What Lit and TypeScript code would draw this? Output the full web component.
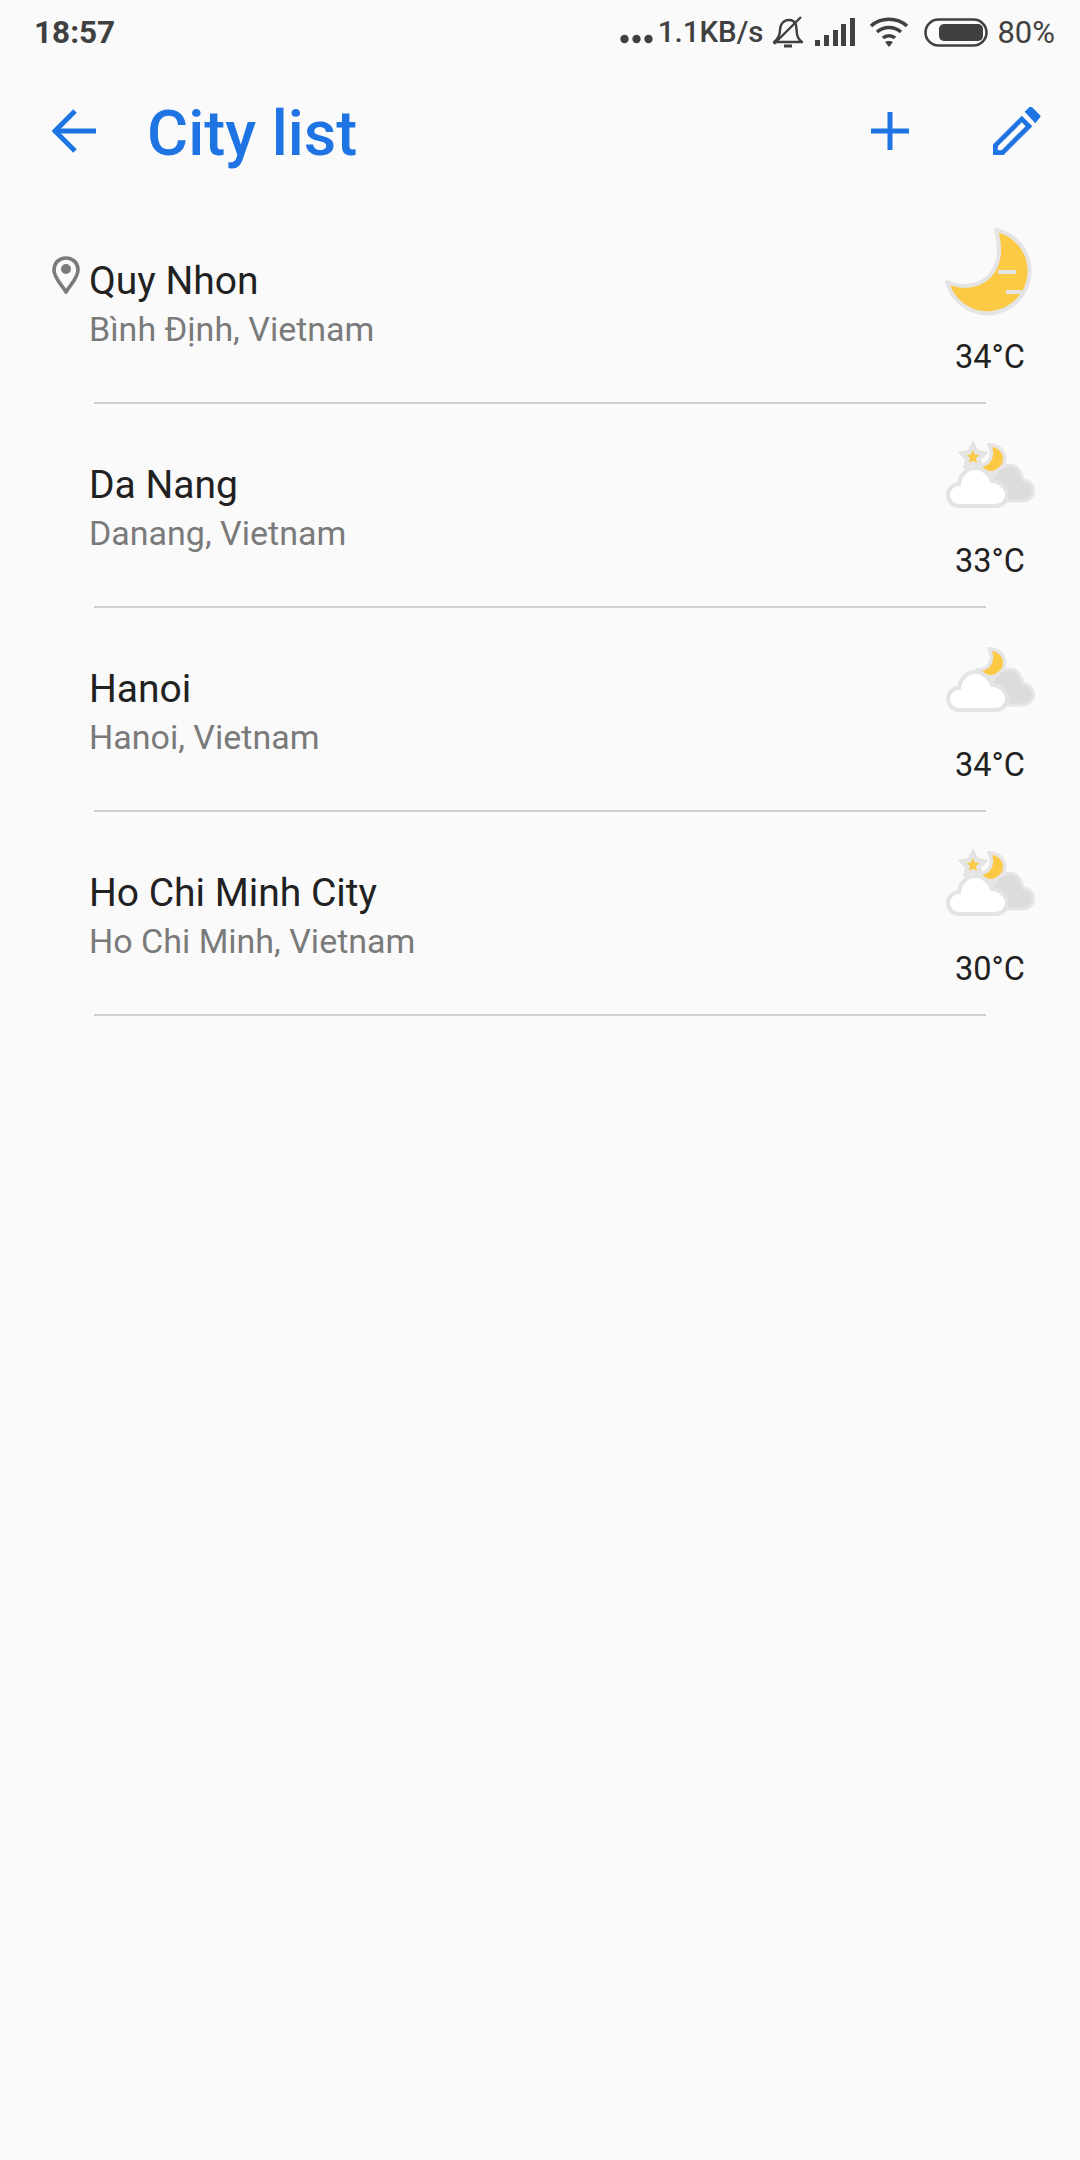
import { LitElement, html, svg, css } from 'lit';
import { customElement } from 'lit/decorators.js';

const cities = [
  { name: 'Quy Nhon', region: 'Bình Định, Vietnam', temp: '34°C', icon: 'moon', pin: true },
  { name: 'Da Nang', region: 'Danang, Vietnam', temp: '33°C', icon: 'star', pin: false },
  { name: 'Hanoi', region: 'Hanoi, Vietnam', temp: '34°C', icon: 'cloud', pin: false },
  { name: 'Ho Chi Minh City', region: 'Ho Chi Minh, Vietnam', temp: '30°C', icon: 'star', pin: false },
];

const moonIcon = html`<svg width="96" height="96" viewBox="0 0 96 96">
  <path d="M54 6 A42 42 0 1 1 5 58 C30 70 68 55 54 6 Z" fill="#fcc945" stroke="#e4e4e4" stroke-width="4" stroke-linejoin="round"/>
  <path d="M56 48 H74 M64 68 H80" stroke="#e4e4e4" stroke-width="4" fill="none"/>
</svg>`;

const cloudIcon = (star: boolean) => html`<svg width="96" height="96" viewBox="0 0 96 96">
  ${star ? svg`<path d="M31 14 L35.500 23 L45 24.500 L38 31 L40 40 L31 36 L22 40 L24 31 L17 24.500 L26.500 23 Z" fill="#e4e4e4" stroke="#e4e4e4" stroke-width="2" stroke-linejoin="round"/>
  <path d="M31 22 L33 26.500 L37.500 27 L34 30 L35 35 L31 32.500 L27 35 L28 30 L24.500 27 L29 26.500 Z" fill="#fcc945"/>` : ''}
  <path d="M50 19 A12 12 0 1 1 40 39 C47 38 54 30 50 19 Z" fill="#fcc945" stroke="#e4e4e4" stroke-width="7" paint-order="stroke"/>
  <path d="M56 73 H81 A10.500 10.500 0 0 0 81 52 C79 42 74 37 68 37 C60 37 54 42 50 50 Z" fill="#dcdcdc" stroke="#e6e6e6" stroke-width="3"/>
  <path d="M17 78 A11 11 0 0 1 17 56 C18 46 26 40 33 40 C41 40 48 46 50 53 C58 53 65 60 65 67 C65 73 60 78 54 78 Z" fill="#fff" stroke="#e4e4e4" stroke-width="4"/>
</svg>`;

@customElement('app-root')
export class AppRoot extends LitElement {
  static styles = css`
    :host {
      display: block;
      width: 1080px;
      height: 2160px;
      background: #fafafa;
      font-family: Roboto, sans-serif;
      overflow: hidden;
    }

    .status {
      display: flex;
      align-items: center;
      height: 62px;
      padding: 2px 25px 0 34px;
      box-sizing: border-box;
      color: #404040;
      font-size: 30px;
    }

    .time {
      font-size: 31.5px;
      font-weight: 700;
      flex: 1;
    }

    .dots {
      margin-top: 14px;
    }

    .speed {
      font-weight: 500;
      margin-left: 5px;
      font-size: 29.5px;
    }

    .status svg {
      display: block;
      flex: none;
    }

    .bell {
      margin-left: 9px;
    }

    .signal {
      margin-left: 11px;
    }

    .wifi {
      margin-left: 14px;
    }

    .battery {
      margin-left: 15px;
    }

    .percent {
      margin-left: 9px;
      font-size: 31px;
    }

    .header {
      display: flex;
      align-items: center;
      height: 138px;
      color: #1f74e4;
    }

    .header svg {
      display: block;
      flex: none;
    }

    .back {
      margin-left: 52px;
    }

    .title {
      flex: 1;
      margin-left: 51px;
      padding-top: 4px;
      font-size: 63px;
      font-weight: 500;
    }

    .edit {
      margin: 0 39px 0 84px;
    }

    .row {
      display: flex;
      height: 202px;
      padding-right: 42px;
    }

    .pin-slot {
      width: 37px;
      margin-left: 52px;
      padding-top: 56px;
    }

    .pin-slot svg {
      display: block;
    }

    .text {
      flex: 1;
      padding-top: 57px;
    }

    .name {
      font-size: 39px;
      line-height: 48px;
      color: #212121;
    }

    .region {
      font-size: 34px;
      line-height: 48px;
      color: #7a7a7a;
    }

    .weather {
      width: 96px;
      padding-top: 24px;
      text-align: center;
      font-size: 32.5px;
      color: #212121;
    }

    .weather svg {
      display: block;
    }

    .temp {
      margin-top: 19px;
      line-height: 36px;
    }

    .divider {
      height: 2px;
      margin: 0 94px;
      background: #cfcfcf;
    }
  `;

  render() {
    return html`
      <div class="status">
        <span class="time">18:57</span>
        <svg class="dots" width="33" height="10" viewBox="0 0 33 10">
          <circle cx="4.500" cy="5" r="4.200" fill="#404040"/><circle cx="16.500" cy="5" r="4.200" fill="#404040"/><circle cx="28.500" cy="5" r="4.200" fill="#404040"/>
        </svg>
        <span class="speed">1.1KB/s</span>
        <svg class="bell" width="32" height="32" viewBox="0 0 32 32" fill="none" stroke="#404040" stroke-width="2.400">
          <path d="M2 26 C6 23 8 20 8 14 C8 8 12 4 17 4 C20 4 23 6 24 9 L25 18 C25.500 21 27 24 30 26 Z" stroke-linejoin="round"/>
          <path d="M2 28 L29 1"/>
          <path d="M12 30 H20" stroke-width="3"/>
        </svg>
        <svg class="signal" width="40" height="28" viewBox="0 0 40 28" fill="#404040">
          <rect x="0" y="22" width="5" height="6"/><rect x="9" y="17" width="5" height="11"/><rect x="18" y="12" width="5" height="16"/><rect x="26" y="6" width="5" height="22"/><rect x="35" y="0" width="5" height="28"/>
        </svg>
        <svg class="wifi" width="40" height="30" viewBox="0 0 40 30" fill="none" stroke="#404040" stroke-width="3.600">
          <path d="M2 9 C12 0 28 0 38 9"/><path d="M8 15 C15 9 25 9 32 15"/><path d="M14 21 C17 18 23 18 26 21"/>
          <path d="M20 30 L16 25 C18 23.500 22 23.500 24 25 Z" fill="#404040" stroke="none"/>
        </svg>
        <svg class="battery" width="64" height="29" viewBox="0 0 64 29">
          <rect x="1.500" y="1.500" width="61" height="26" rx="13" fill="none" stroke="#404040" stroke-width="2.600"/>
          <rect x="15" y="6" width="44" height="17" rx="5" fill="#404040"/>
        </svg>
        <span class="percent">80%</span>
      </div>
      <div class="header">
        <svg class="back" width="44" height="44" viewBox="0 0 44 44" fill="none" stroke="currentColor" stroke-width="5">
          <path d="M44 22 H4"/><path d="M23 2 L3 22 L23 42"/>
        </svg>
        <span class="title">City list</span>
        <svg width="38" height="38" viewBox="0 0 38 38" fill="currentColor">
          <rect x="16.500" y="0" width="5" height="38"/><rect x="0" y="16.500" width="38" height="5"/>
        </svg>
        <svg class="edit" width="48" height="48" viewBox="0 0 50 50" fill="currentColor">
          <path d="M0 50 V39 L30 9 L41 20 L11 50 Z M5 45 H9 L34 20 L30 16 L5 41 Z" fill-rule="evenodd"/>
          <path d="M33 5 L38 0 Q39 -1 40.500 0 L49 8.500 Q50 10 49 11 L44 17 Z"/>
        </svg>
      </div>
      ${cities.map(
        (c) => html`
          <div class="row">
            <div class="pin-slot">
              ${c.pin
                ? html`<svg width="28" height="38" viewBox="0 0 28 38">
                    <path d="M14 2 C7 2 2 7 2 14 C2 22 10 29 14 36 C18 29 26 22 26 14 C26 7 21 2 14 2 Z" fill="none" stroke="#7a7a7a" stroke-width="3.600" stroke-linejoin="round"/>
                    <circle cx="14" cy="13" r="5" fill="#7a7a7a"/>
                  </svg>`
                : ''}
            </div>
            <div class="text">
              <div class="name">${c.name}</div>
              <div class="region">${c.region}</div>
            </div>
            <div class="weather">
              ${c.icon === 'moon' ? moonIcon : cloudIcon(c.icon === 'star')}
              <div class="temp">${c.temp}</div>
            </div>
          </div>
          <div class="divider"></div>
        `
      )}
    `;
  }
}
